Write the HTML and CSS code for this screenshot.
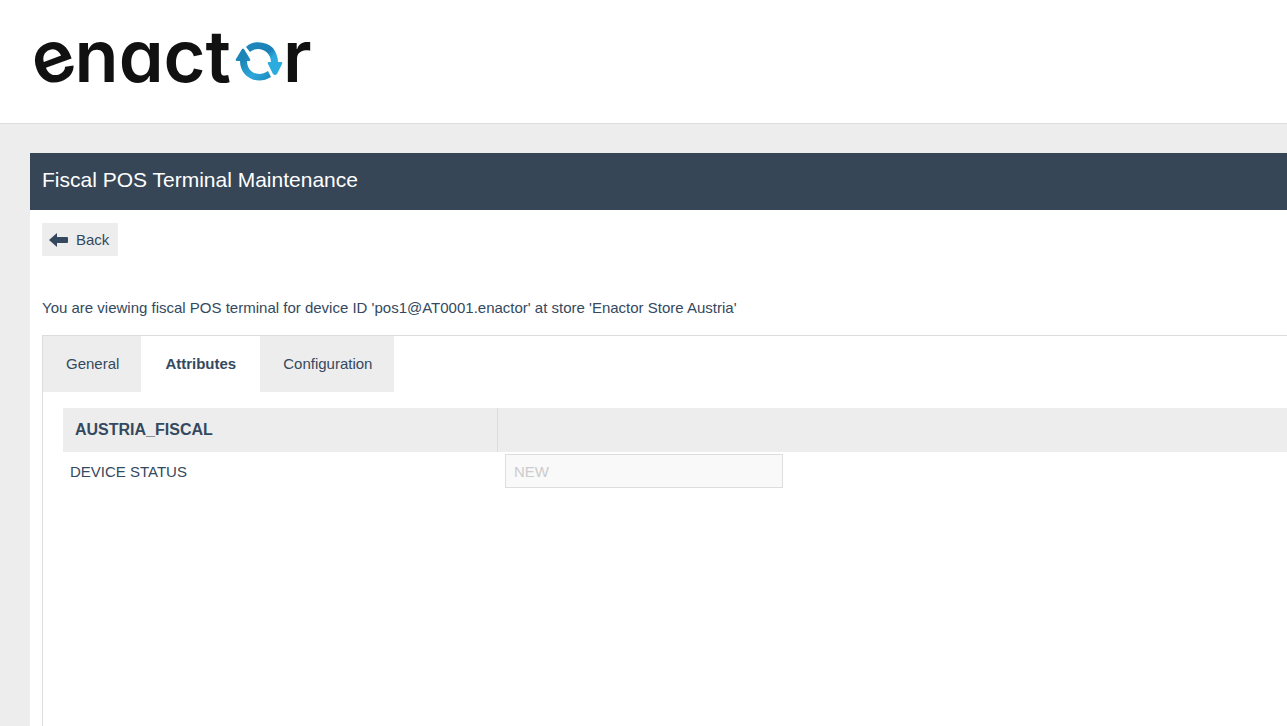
FILE: index.html
```
<!DOCTYPE html>
<html lang="en">
<head>
  <meta charset="UTF-8">
  <title>Fiscal POS Terminal Maintenance</title>
  <link rel="stylesheet" href="styles.css">
</head>
<body>
  <header class="header">
    <div class="logo">
      <span class="logo-tilt">e</span>
      <span>nact</span>
      <svg class="logo-icon" width="48" height="40" viewBox="0 0 48 40" aria-hidden="true">
        <defs>
          <linearGradient id="right" x1="0" y1="0" x2="1" y2="1">
            <stop offset="0" stop-color="#2089bd"/>
            <stop offset="0.45" stop-color="#1a80b5"/>
            <stop offset="0.6" stop-color="#2cabdf"/>
          </linearGradient>
          <linearGradient id="left" x1="0" y1="0" x2="1" y2="1">
            <stop offset="0.3" stop-color="#1c86b9"/>
            <stop offset="0.65" stop-color="#2da8dc"/>
            <stop offset="1" stop-color="#1c86b9"/>
          </linearGradient>
        </defs>
        <path fill="url(#right)" d="M11 5C18-2 31-1 38 6C41 10 43 15 43 20L46 20Q48 20 47 22L42 32Q40 34 38 32L33 22Q32 20 34 20L36 20C36 9 23 3 15 10Z"/>
        <path fill="url(#left)" d="M7 7Q8 6 9 7L15 17Q16 19 14 19L12 19C12 30 23 36 33 29L36 35C22 44 5 35 5 19L2 19Q0 19 1 17Z"/>
      </svg>
      <span>r</span>
    </div>
  </header>

  <main class="panel">
    <h1 class="panel-title">Fiscal POS Terminal Maintenance</h1>
    <div class="panel-body">
      <button type="button" class="btn-back">
        <svg width="20" height="14" viewBox="0 0 20 14" aria-hidden="true">
          <path fill="#34495e" d="M0 7L8 0V4H18Q19 4 19 5V9Q19 10 18 10H8V14Z"/>
        </svg>
        Back
      </button>
      <p class="message">You are viewing fiscal POS terminal for device ID 'pos1@AT0001.enactor' at store 'Enactor Store Austria'</p>

      <div class="tabs">
        <nav class="tab-list">
          <a href="#general" class="tab">General</a>
          <a href="#attributes" class="tab active">Attributes</a>
          <a href="#configuration" class="tab">Configuration</a>
        </nav>
        <div class="tab-content" id="attributes">
          <table class="attributes">
            <thead>
              <tr>
                <th>AUSTRIA_FISCAL</th>
                <th></th>
              </tr>
            </thead>
            <tbody>
              <tr>
                <td><label for="deviceStatus">DEVICE STATUS</label></td>
                <td><input type="text" id="deviceStatus" name="deviceStatus" value="NEW" disabled></td>
              </tr>
            </tbody>
          </table>
        </div>
      </div>
    </div>
  </main>
</body>
</html>
```
FILE: styles.css
```
* {
  margin: 0;
  padding: 0;
  box-sizing: border-box;
}

body {
  background-color: #ededed;
  color: #34495e;
  font-family: "Liberation Sans", Arial, sans-serif;
  font-size: 15px;
  min-height: 100vh;
  display: flex;
  flex-direction: column;
}

.header {
  background-color: #fff;
  border-bottom: 1px solid #ddd;
  height: 124px;
  padding: 20px 32px;
}

.logo {
  display: flex;
  align-items: center;
  color: #111;
  font-family: Inter, Lato, sans-serif;
  font-feature-settings: "cv11";
  font-size: 72px;
  font-weight: 600;
  line-height: 72px;
}

/* the first letter leans back so its bar is slanted */
.logo-tilt {
  transform: rotate(-20deg);
  transform-origin: 50% 58%;
}

.logo-icon {
  margin: 12px 0 0 4px;
}

.panel {
  background-color: #fff;
  margin: 29px 0 0 30px;
  flex: 1;
  display: flex;
  flex-direction: column;
}

.panel-title {
  background-color: #364656;
  color: #fff;
  font-size: 21px;
  font-weight: normal;
  line-height: 24px;
  padding: 15px 12px 18px;
}

.panel-body {
  padding: 13px 0 0 12px;
  flex: 1;
  display: flex;
  flex-direction: column;
}

.btn-back {
  display: flex;
  align-items: center;
  align-self: flex-start;
  gap: 7px;
  height: 33px;
  padding: 0 9px 0 7px;
  background-color: #ededed;
  border: none;
  color: #34495e;
  font-family: inherit;
  font-size: 15px;
  cursor: pointer;
}

.message {
  margin-top: 42px;
  line-height: 20px;
}

.tabs {
  margin-top: 17px;
  border-top: 1px solid #ddd;
  border-left: 1px solid #ddd;
  flex: 1;
}

.tab-list {
  display: flex;
}

.tab {
  background-color: #ededed;
  color: #34495e;
  line-height: 56px;
  padding: 0 22px 0 23px;
  text-decoration: none;
}

.tab.active {
  background-color: #fff;
  font-weight: bold;
  padding: 0 24px;
}

.tab-content {
  padding: 16px 0 0 20px;
}

.attributes {
  width: 100%;
  border-collapse: separate;
  border-spacing: 0;
}

.attributes th {
  background-color: #ededed;
  height: 44px;
  padding: 0 12px;
  font-size: 16px;
  text-align: left;
}

.attributes th:first-child {
  width: 435px;
  border-right: 1px solid #ddd;
}

.attributes td {
  padding: 2px 7px;
}

.attributes input {
  display: block;
  width: 278px;
  height: 34px;
  padding: 0 8px;
  background-color: #f9f9f9;
  border: 1px solid #ddd;
  color: #ccc;
  font-family: inherit;
  font-size: 15px;
}
```
